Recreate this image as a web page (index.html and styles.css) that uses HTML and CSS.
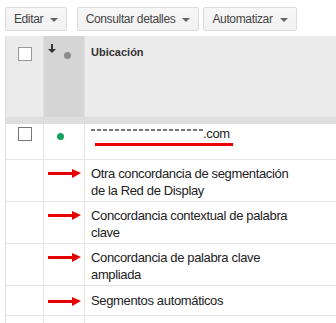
FILE: index.html
```html
<!DOCTYPE html>
<html lang="es">
<head>
    <meta charset="UTF-8">
    <meta name="viewport" content="width=device-width, initial-scale=1.0">
    <title>Ubicaciones</title>
    <link rel="stylesheet" href="styles.css">
</head>
<body>

<div class="toolbar">
    <button class="btn">Editar <span class="caret"></span></button>
    <button class="btn btn-wide">Consultar detalles <span class="caret"></span></button>
    <button class="btn">Automatizar <span class="caret"></span></button>
</div>

<div class="grid">
    <div class="row head">
        <div class="cell c-check"><span class="box"></span></div>
        <div class="cell c-status sorted">
            <svg class="sort" width="8" height="9" viewBox="0 0 8 9"><path d="M3 0h2v5h3L4 9 0 5h3z" fill="#333"/></svg>
            <span class="dot gray"></span>
        </div>
        <div class="cell c-name">Ubicación</div>
    </div>
    <div class="row band">
        <div class="cell c-check"></div>
        <div class="cell c-status"></div>
        <div class="cell c-name"></div>
    </div>

    <div class="row first">
        <div class="cell c-check"><span class="box"></span></div>
        <div class="cell c-status"><span class="dot green"></span></div>
        <div class="cell c-name">
            <span class="hidden-site"></span>.com
            <span class="underline"></span>
        </div>
    </div>

    <div class="row">
        <div class="cell c-check"></div>
        <div class="cell c-status"><span class="arrow"></span></div>
        <div class="cell c-name">Otra concordancia de segmentación de la Red de Display</div>
    </div>
    <div class="row">
        <div class="cell c-check"></div>
        <div class="cell c-status"><span class="arrow"></span></div>
        <div class="cell c-name">Concordancia contextual de palabra clave</div>
    </div>
    <div class="row">
        <div class="cell c-check"></div>
        <div class="cell c-status"><span class="arrow"></span></div>
        <div class="cell c-name">Concordancia de palabra clave ampliada</div>
    </div>
    <div class="row single">
        <div class="cell c-check"></div>
        <div class="cell c-status"><span class="arrow"></span></div>
        <div class="cell c-name">Segmentos automáticos</div>
    </div>
    <div class="row">
        <div class="cell c-check"></div>
        <div class="cell c-status"></div>
        <div class="cell c-name"></div>
    </div>
</div>

</body>
</html>
```

FILE: styles.css
```css
/* Base */
body {
    margin: 0;
    background-color: #fff;
    font-family: 'Liberation Sans', Arial, sans-serif;
    color: #222;
    width: 336px;
    height: 323px;
    overflow: hidden;
}

/* Toolbar buttons */
.toolbar {
    display: flex;
    gap: 10px;
    padding: 7px 0 0 5px;
    height: 29px;
}

.btn {
    height: 24px;
    width: 62px;
    padding: 0;
    border: 1px solid #dcdcdc;
    border-radius: 2px;
    background: linear-gradient(#f7f7f7, #f1f1f1);
    color: #444;
    font-family: inherit;
    font-size: 12px;
    letter-spacing: -0.35px;
}

.btn-wide {
    width: 122px;
}

.btn + .btn-wide + .btn {
    width: 94px;
    margin-left: -6px;
}

.caret {
    display: inline-block;
    margin-left: 4px;
    vertical-align: middle;
    border-left: 4px solid transparent;
    border-right: 4px solid transparent;
    border-top: 4px solid #666;
}

/* Table */
.grid {
    margin-left: 5px;
    border-left: 1px solid #e0e0e0;
}

.row {
    display: flex;
    height: 41px;
    border-bottom: 1px solid #e5e5e5;
}

.cell {
    box-sizing: border-box;
    border-right: 1px solid #e5e5e5;
}

.c-check {
    width: 38px;
    display: flex;
    justify-content: center;
    padding-top: 3px;
}

.c-status {
    width: 41px;
    position: relative;
}

.c-name {
    flex: 1;
    border-right: none;
    padding: 5px 40px 0 6px;
    font-size: 13px;
    line-height: 17px;
    letter-spacing: -0.35px;
}

.single {
    height: 29px;
}

.single .c-name {
    padding-top: 6px;
}

/* Header */
.head {
    height: 81px;
    background-color: #ebebeb;
    border-bottom: none;
}

.head .cell {
    border-right-color: #e0e0e0;
}

.head .c-check {
    padding-top: 11px;
}

.head .c-name {
    padding-top: 8px;
    font-weight: bold;
    font-size: 11px;
    letter-spacing: 0;
    color: #333;
}

.sorted {
    background-color: #d5d5d5;
}

.sort {
    position: absolute;
    left: 4px;
    top: 8px;
}

.head .dot {
    position: absolute;
    left: 20px;
    top: 16px;
}

.band {
    height: 7px;
    background-color: #dedede;
    border-bottom: none;
}

.band .cell {
    border-right-color: #d8d8d8;
}

.first {
    height: 35px;
}

.first .c-name {
    padding-top: 1px;
}

/* Checkbox */
.box {
    width: 12px;
    height: 12px;
    border: 1px solid #777;
    background-color: #fff;
}

.head .box {
    border-color: #999;
}

/* Status dots */
.dot {
    display: inline-block;
    width: 7px;
    height: 7px;
    border-radius: 50%;
}

.gray {
    background-color: #8a8a8a;
}

.green {
    background-color: #14a35c;
    position: absolute;
    left: 13px;
    top: 9px;
}

/* Obscured site name */
.hidden-site {
    display: inline-block;
    width: 112px;
    height: 2px;
    vertical-align: 7px;
    background: repeating-linear-gradient(90deg, #777 0 4px, transparent 4px 6px);
}

.underline {
    display: block;
    width: 138px;
    height: 3px;
    margin: 1px 0 0 4px;
    background-color: #e00;
}

/* Red arrows */
.arrow {
    position: absolute;
    left: 4px;
    top: 12px;
    width: 25px;
    height: 3px;
    background-color: #e60000;
}

.single .arrow {
    top: 14px;
}

.arrow::after {
    content: "";
    position: absolute;
    left: 24px;
    top: -3px;
    border-top: 4px solid transparent;
    border-bottom: 5px solid transparent;
    border-left: 9px solid #e60000;
    box-sizing: border-box;
    height: 9px;
}
```
